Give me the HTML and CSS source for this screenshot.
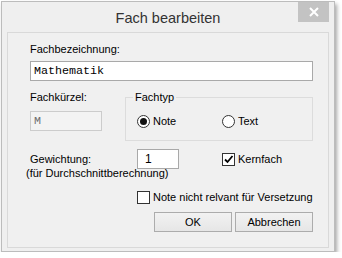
FILE: index.html
```html
<!DOCTYPE html>
<html lang="de">
<head>
<meta charset="utf-8">
<title>Fach bearbeiten</title>
<link rel="stylesheet" href="styles.css">
</head>
<body>
<div class="window">
  <div class="titlebar">
    <span class="title">Fach bearbeiten</span>
    <span class="close">
      <svg width="10" height="10" viewBox="0 0 10 10"><path d="M1 1L9 9M9 1L1 9" stroke="#fff" stroke-width="2" fill="none"/></svg>
    </span>
  </div>
  <div class="client">
    <div class="label first">Fachbezeichnung:</div>
    <div class="input wide mono">Mathematik</div>
    <div class="row2">
      <div class="col-left">
        <div class="label">Fachkürzel:</div>
        <div class="input short mono disabled">M</div>
      </div>
      <div class="group">
        <span class="legend">Fachtyp</span>
        <div class="radios">
          <div class="opt"><span class="radio on"></span><span>Note</span></div>
          <div class="opt"><span class="radio"></span><span>Text</span></div>
        </div>
      </div>
    </div>
    <div class="row3">
      <div class="label">Gewichtung:</div>
      <div class="input num">1</div>
      <div class="opt check-opt"><span class="check on"><svg width="11" height="11" viewBox="0 0 11 11"><path d="M2 5.5L4.5 8L9.5 2" stroke="#000" stroke-width="1.8" fill="none"/></svg></span><span>Kernfach</span></div>
    </div>
    <div class="sublabel">(für Durchschnittberechnung)</div>
    <div class="opt note-opt"><span class="check"></span><span>Note nicht relvant für Versetzung</span></div>
    <div class="buttons">
      <div class="btn">OK</div>
      <div class="btn">Abbrechen</div>
    </div>
  </div>
</div>
</body>
</html>
```
FILE: styles.css
```css
* { box-sizing: border-box; }
html, body { margin: 0; padding: 0; background: #ffffff; }
body { font-family: "Liberation Sans", Arial, sans-serif; font-size: 11px; color: #000; }

.window {
  margin: 1px 0 0 1px;
  width: 334px;
  height: 251px;
  border: 1px solid #bcbcbc;
  background: #efefef;
  padding: 0 5px 3px 5px;
  box-shadow: 2px 3px 4px rgba(0, 0, 0, 0.35);
  display: flex;
  flex-direction: column;
}

.titlebar {
  position: relative;
  height: 30px;
  display: flex;
  align-items: center;
  justify-content: center;
  flex: none;
}
.title {
  font-size: 14.5px;
  color: #333;
  margin-top: 1px;
}
.close {
  position: absolute;
  top: 0;
  right: 0;
  width: 31px;
  height: 20px;
  background: #c3c3c3;
  display: flex;
  align-items: center;
  justify-content: center;
}
.close svg { display: block; }

.client {
  flex: 1;
  border: 1px solid #d9d9d9;
  background: #f0f0f0;
  padding: 9px 0 0 22px;
  display: flex;
  flex-direction: column;
  align-items: flex-start;
}

.label { line-height: 14px; height: 14px; white-space: nowrap; }

.input {
  background: #fff;
  border: 1px solid #a9a9a9;
  height: 20px;
  line-height: 18px;
  padding-left: 3px;
}
.mono { font-family: "Liberation Mono", "Courier New", monospace; font-size: 11.7px; }
.wide { width: 283px; margin-top: 5px; }
.short { width: 72px; margin-top: 7px; }
.disabled { background: #f3f3f3; border-color: #cccccc; color: #6d6d6d; }

.row2 { display: flex; margin-top: 9px; }
.col-left { width: 95px; display: flex; flex-direction: column; }

.group {
  position: relative;
  margin-top: 7px;
  width: 188px;
  height: 44px;
  border: 1px solid #dcdcdc;
}
.legend {
  position: absolute;
  top: -8px;
  left: 7px;
  padding: 0 2px;
  background: #f0f0f0;
  line-height: 14px;
}
.radios {
  display: flex;
  padding: 16px 0 0 11px;
}
.opt { display: flex; align-items: center; line-height: 14px; white-space: nowrap; }
.radios .opt { width: 85px; gap: 3px; }

.radio {
  width: 13px;
  height: 13px;
  border: 1px solid #333;
  border-radius: 50%;
  background: #fff;
  display: flex;
  align-items: center;
  justify-content: center;
  flex: none;
}
.radio.on::after {
  content: "";
  width: 7px;
  height: 7px;
  border-radius: 50%;
  background: #111;
}

.check {
  width: 13px;
  height: 13px;
  border: 1px solid #333;
  background: #fff;
  display: flex;
  align-items: center;
  justify-content: center;
  flex: none;
}
.check svg { display: block; }

.row3 {
  display: grid;
  grid-template-columns: 107px 42px 43px auto;
  align-items: center;
  margin-top: 8px;
}
.num { width: 42px; padding-left: 7px; font-size: 12px; }
.check-opt { grid-column: 4; gap: 3px; }

.sublabel { margin: -3px 0 0 -4px; line-height: 14px; }

.note-opt { margin: 10px 0 0 107px; gap: 3px; }

.buttons {
  display: flex;
  gap: 3px;
  margin: 8px 0 0 124px;
}
.btn {
  width: 78px;
  height: 20px;
  border: 1px solid #acacac;
  background: linear-gradient(#f2f2f2, #e6e6e6);
  display: flex;
  align-items: center;
  justify-content: center;
}
```
